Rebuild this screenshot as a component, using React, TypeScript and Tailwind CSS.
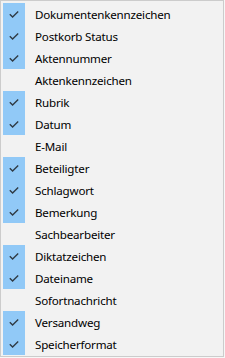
import React from "react";

const items: { label: string; checked: boolean }[] = [
  { label: "Dokumentenkennzeichen", checked: true },
  { label: "Postkorb Status", checked: true },
  { label: "Aktennummer", checked: true },
  { label: "Aktenkennzeichen", checked: false },
  { label: "Rubrik", checked: true },
  { label: "Datum", checked: true },
  { label: "E-Mail", checked: false },
  { label: "Beteiligter", checked: true },
  { label: "Schlagwort", checked: true },
  { label: "Bemerkung", checked: true },
  { label: "Sachbearbeiter", checked: false },
  { label: "Diktatzeichen", checked: true },
  { label: "Dateiname", checked: true },
  { label: "Sofortnachricht", checked: false },
  { label: "Versandweg", checked: true },
  { label: "Speicherformat", checked: true },
];

const Check: React.FC = () => (
  <svg width="10" height="7" viewBox="0 0 10 7" fill="none">
    <path d="M0.8 3.2 L3.6 6 L9.2 0.6" stroke="#2f3a44" strokeWidth="1.4" />
  </svg>
);

const App: React.FC = () => {
  return (
    <div className="w-[225px] h-[358px] bg-[#f7f7f7]">
      <div
        className="w-[224px] h-[357px] border border-[#cccccc] bg-[#f2f2f2] p-[2px] text-[11.6px] tracking-[-0.2px] text-black"
        style={{ fontFamily: '"Noto Sans", "Open Sans", sans-serif' }}
      >
        {items.map((item) => (
          <div key={item.label} className="flex h-[22px] items-center">
            <div
              className={
                item.checked
                  ? "flex h-[22px] w-[22px] items-center justify-center bg-[#91c9f7]"
                  : "h-[22px] w-[22px]"
              }
            >
              {item.checked && <Check />}
            </div>
            <span className="ml-[10px] pt-[1px] leading-none">{item.label}</span>
          </div>
        ))}
      </div>
    </div>
  );
};

export default App;
